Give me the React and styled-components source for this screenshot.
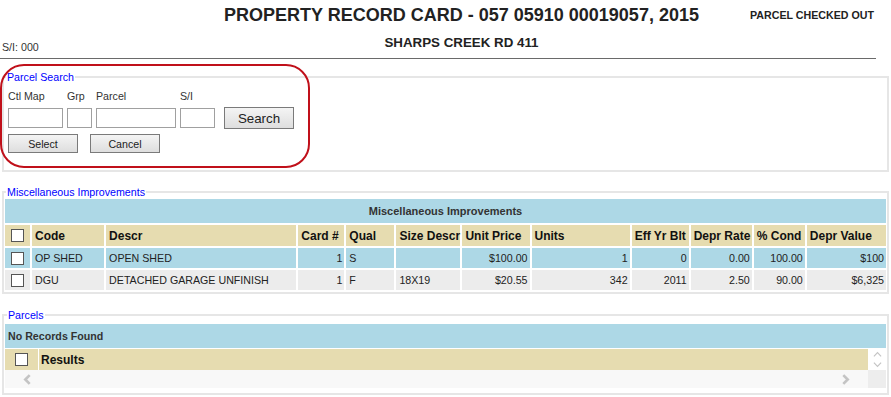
import styled, { createGlobalStyle } from 'styled-components';

const GlobalStyle = createGlobalStyle`
  html, body {
    margin: 0;
    padding: 0;
    background: #fff;
  }
  body {
    font-family: "Liberation Sans", Arial, sans-serif;
    color: #222;
  }
`;

const improvements = [
  { code: 'OP SHED', descr: 'OPEN SHED', card: '1', qual: 'S', size: '', price: '$100.00', units: '1', eff: '0', rate: '0.00', cond: '100.00', value: '$100' },
  { code: 'DGU', descr: 'DETACHED GARAGE UNFINISH', card: '1', qual: 'F', size: '18X19', price: '$20.55', units: '342', eff: '2011', rate: '2.50', cond: '90.00', value: '$6,325' },
];

const columns = [
  { key: 'code', label: 'Code', width: 72 },
  { key: 'descr', label: 'Descr', width: 190 },
  { key: 'card', label: 'Card #', width: 46, right: true },
  { key: 'qual', label: 'Qual', width: 48 },
  { key: 'size', label: 'Size Descr', width: 64 },
  { key: 'price', label: 'Unit Price', width: 67, right: true },
  { key: 'units', label: 'Units', width: 98, right: true },
  { key: 'eff', label: 'Eff Yr Blt', width: 57, right: true },
  { key: 'rate', label: 'Depr Rate', width: 61, right: true },
  { key: 'cond', label: '% Cond', width: 51, right: true },
  { key: 'value', label: 'Depr Value', width: 79, right: true },
];

const Chevron = ({ dir, size = 10, color = '#c4c4c4', width = 2.4 }) => {
  const paths = {
    left: 'M7 1 L3 5 L7 9',
    right: 'M3 1 L7 5 L3 9',
    up: 'M1 7 L5 3 L9 7',
    down: 'M1 3 L5 7 L9 3',
  };
  return (
    <svg width={size} height={size} viewBox="0 0 10 10">
      <path d={paths[dir]} fill="none" stroke={color} strokeWidth={width} />
    </svg>
  );
};

const App = () => {
  return (
    <Page>
      <GlobalStyle />
      <Header>
        <span />
        <Title>PROPERTY RECORD CARD - 057 05910 00019057, 2015</Title>
        <Status>PARCEL CHECKED OUT</Status>
        <SerialNo>S/I: 000</SerialNo>
        <Subtitle>SHARPS CREEK RD 411</Subtitle>
        <span />
      </Header>
      <Rule />

      <SearchArea>
        <Fieldset $pad="0 4px 17px">
          <Legend $indent="-2px">Parcel Search</Legend>
          <SearchGrid>
            <FieldLabel>Ctl Map</FieldLabel>
            <FieldLabel>Grp</FieldLabel>
            <FieldLabel>Parcel</FieldLabel>
            <FieldLabel>S/I</FieldLabel>
            <span />
            <TextInput />
            <TextInput />
            <TextInput />
            <TextInput />
            <Button $big>Search</Button>
          </SearchGrid>
          <ButtonRow>
            <Button>Select</Button>
            <Button>Cancel</Button>
          </ButtonRow>
        </Fieldset>
        <Highlight />
      </SearchArea>

      <Fieldset $pad="0" $top="13px">
        <Legend $indent="2px">Miscellaneous Improvements</Legend>
        <Table>
          <colgroup>
            <col style={{ width: 25 }} />
            {columns.map(c => (
              <col key={c.key} style={{ width: c.width }} />
            ))}
          </colgroup>
          <thead>
            <tr>
              <Caption colSpan={12}>Miscellaneous Improvements</Caption>
            </tr>
            <tr>
              <HeadCell $check><Checkbox type="checkbox" /></HeadCell>
              {columns.map(c => (
                <HeadCell key={c.key}>{c.label}</HeadCell>
              ))}
            </tr>
          </thead>
          <tbody>
            {improvements.map((row, i) => (
              <tr key={row.code}>
                <Cell $alt={i % 2 === 1} $check><Checkbox type="checkbox" /></Cell>
                {columns.map(c => (
                  <Cell key={c.key} $alt={i % 2 === 1} $right={c.right}>{row[c.key]}</Cell>
                ))}
              </tr>
            ))}
          </tbody>
        </Table>
      </Fieldset>

      <Fieldset $pad="2px 1px 5px" $top="14px">
        <Legend $indent="2px">Parcels</Legend>
        <NoRecords>No Records Found</NoRecords>
        <ResultsGrid>
          <ResultsHead>
            <ResultsCheck><Checkbox type="checkbox" /></ResultsCheck>
            <ResultsLabel>Results</ResultsLabel>
          </ResultsHead>
          <VScroll>
            <Chevron dir="up" size={9} width={1.3} />
            <Chevron dir="down" size={9} width={1.3} />
          </VScroll>
          <HScroll>
            <Chevron dir="left" size={11} />
            <Chevron dir="right" size={11} />
          </HScroll>
          <Corner />
        </ResultsGrid>
      </Fieldset>
    </Page>
  );
};

const Page = styled.div`
  padding-top: 4px;
  font-size: 8pt;
`;

const Header = styled.header`
  display: grid;
  grid-template-columns: 223px 1fr 191px;
  row-gap: 9px;
  align-items: center;
`;

const Title = styled.h1`
  margin: 0;
  font-size: 18px;
  line-height: 22px;
  font-weight: bold;
  color: #222;
  text-align: center;
  white-space: nowrap;
`;

const Status = styled.div`
  padding-left: 50px;
  font-size: 8pt;
  font-weight: bold;
  color: #222;
  white-space: nowrap;
`;

const SerialNo = styled.div`
  align-self: start;
  padding: 5px 0 0 2px;
  line-height: 14px;
  color: #333;
`;

const Subtitle = styled.h2`
  align-self: start;
  margin: 0;
  font-size: 10pt;
  line-height: 16px;
  font-weight: bold;
  color: #222;
  text-align: center;
`;

const Rule = styled.hr`
  margin: 4px 15px 0 0;
  border: none;
  border-top: 1px solid #6a6a6a;
  height: 0;
`;

const SearchArea = styled.div`
  position: relative;
  margin-top: 11px;
`;

const Fieldset = styled.fieldset`
  margin: ${p => p.$top || '0'} 2px 0;
  padding: ${p => p.$pad};
  border: 2px solid #e6e6e6;
  min-width: 0;
`;

const Legend = styled.legend`
  margin-left: ${p => p.$indent};
  padding: 0 1px;
  font-size: 8pt;
  line-height: 14px;
  color: #0000ff;
`;

const Highlight = styled.div`
  position: absolute;
  left: 0;
  top: -6px;
  width: 310px;
  height: 104px;
  box-sizing: border-box;
  border: 2px solid #c0101a;
  border-radius: 24px;
  pointer-events: none;
`;

const SearchGrid = styled.div`
  display: grid;
  grid-template-columns: 55px 25px 80px 35px 70px;
  column-gap: 4px;
  row-gap: 4px;
  align-items: center;
  margin-top: 5px;

  & > button {
    margin-left: 5px;
  }
`;

const FieldLabel = styled.label`
  line-height: 14px;
  color: #333;
`;

const TextInput = styled.input`
  box-sizing: border-box;
  width: 100%;
  height: 20px;
  margin: 0;
  padding: 1px 3px;
  border: 1px solid #a0a0a0;
  background: #fff;
  font: inherit;
`;

const Button = styled.button`
  box-sizing: border-box;
  width: 70px;
  height: ${p => (p.$big ? '22px' : '19px')};
  margin: 0;
  padding: 0;
  border: 1px solid #7a7a7a;
  border-radius: 0;
  background: linear-gradient(#f4f4f4, #dedede);
  font-family: "Liberation Sans", Arial, sans-serif;
  font-size: ${p => (p.$big ? '10pt' : '8pt')};
  color: #222;
`;

const ButtonRow = styled.div`
  display: flex;
  gap: 12px;
  margin-top: 5px;
`;

const Table = styled.table`
  table-layout: fixed;
  width: calc(100% + 2px);
  margin: -2px 0 0 -1px;
  border-collapse: separate;
  border-spacing: 2px;
  font-size: 8pt;
  line-height: 12px;
  color: #222;
`;

const Caption = styled.th`
  height: 24px;
  padding: 0;
  background: #add8e6;
  font-size: 11px;
  font-weight: bold;
  color: #333;
  text-align: center;
`;

const HeadCell = styled.th`
  height: 21px;
  padding: 0 0 0 ${p => (p.$check ? '0' : '3px')};
  background: #e6dcb0;
  font-size: 12px;
  font-weight: bold;
  color: #111;
  text-align: ${p => (p.$check ? 'center' : 'left')};
  white-space: nowrap;
  overflow: visible;
`;

const Cell = styled.td`
  height: 20px;
  padding: 0 ${p => (p.$check ? '0' : '2px')} 0 ${p => (p.$check ? '0' : '3px')};
  background: ${p => (p.$alt ? '#ececec' : '#add8e6')};
  text-align: ${p => (p.$check ? 'center' : p.$right ? 'right' : 'left')};
  white-space: nowrap;
  overflow: hidden;
`;

const Checkbox = styled.input`
  appearance: none;
  display: block;
  box-sizing: border-box;
  width: 13px;
  height: 13px;
  margin: 0 auto;
  border: 1px solid #555;
  background: #fff;
`;

const NoRecords = styled.div`
  height: 24px;
  margin-bottom: 1px;
  padding-left: 3px;
  display: flex;
  align-items: center;
  background: #add8e6;
  font-weight: bold;
  color: #333;
`;

const ResultsGrid = styled.div`
  display: grid;
  grid-template-columns: 1fr 18px;
  grid-template-rows: 21px 18px;
`;

const ResultsHead = styled.div`
  display: grid;
  grid-template-columns: 33px 1fr;
  column-gap: 1px;
  background: #fff;
`;

const ResultsCheck = styled.div`
  display: flex;
  align-items: center;
  background: #e6dcb0;
`;

const ResultsLabel = styled.div`
  display: flex;
  align-items: center;
  padding-left: 2px;
  background: #e6dcb0;
  font-size: 12px;
  font-weight: bold;
  color: #111;
`;

const VScroll = styled.div`
  display: flex;
  flex-direction: column;
  align-items: center;
  justify-content: center;
  gap: 1px;
  background: #fff;
`;

const HScroll = styled.div`
  display: flex;
  align-items: center;
  justify-content: space-between;
  padding: 0 17px 0 17px;
  background: #f8f8f8;
`;

const Corner = styled.div`
  background: #ededed;
`;

export default App;
